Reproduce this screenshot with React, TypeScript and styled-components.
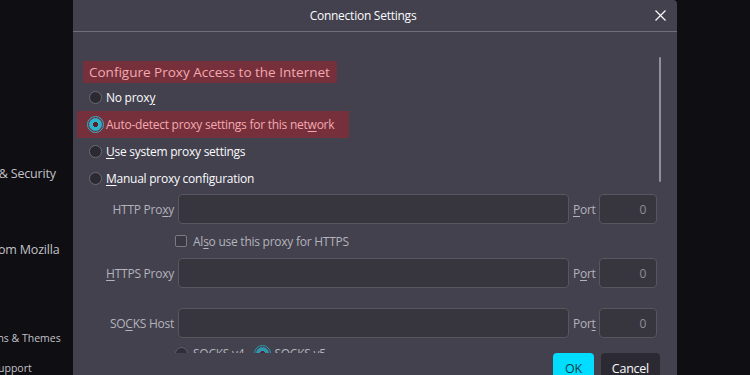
import React from "react";
import styled, { createGlobalStyle } from "styled-components";

const GlobalStyle = createGlobalStyle`
  html, body {
    margin: 0;
    padding: 0;
    background: #0f0e13;
    overflow: hidden;
  }
  body {
    font-family: "Open Sans", "Noto Sans", sans-serif;
    letter-spacing: -0.25px;
    -webkit-font-smoothing: antialiased;
  }
`;

const Page = styled.div`
  width: 750px;
  height: 375px;
  display: flex;
  overflow: hidden;
  background: #0f0e13;
`;

const Sidebar = styled.div`
  width: 73px;
  flex: none;
  overflow: hidden;
`;

const SideList = styled.div`
  display: flex;
  flex-direction: column;
  margin-left: -44px;
  padding-top: 164px;
`;

const SideItem = styled.div<{ $gap: number; $small?: boolean }>`
  margin-top: ${(p) => p.$gap}px;
  height: 20px;
  line-height: 20px;
  white-space: nowrap;
  color: #c2c1c8;
  letter-spacing: ${(p) => (p.$small ? "0" : "-0.2px")};
  font-size: ${(p) => (p.$small ? "10.5px" : "12.5px")};
`;

const Dialog = styled.div`
  width: 604px;
  flex: none;
  height: 375px;
  display: flex;
  flex-direction: column;
  background: #42414d;
  border-top-right-radius: 4px;
  overflow: hidden;
`;

const Header = styled.div`
  height: 31px;
  flex: none;
  display: flex;
  align-items: center;
  justify-content: center;
  padding-right: 24px;
  position: relative;
  border-bottom: 1px solid #6f6e79;
  color: #fbfbfe;
  font-size: 12px;
`;

const CloseButton = styled.div`
  position: absolute;
  right: 10px;
  top: 8px;
  width: 14px;
  height: 14px;
  display: flex;
  align-items: center;
  justify-content: center;
`;

const Scroller = styled.div`
  height: 321px;
  flex: none;
  overflow: hidden;
  position: relative;
  padding: 29px 20px 0 10px;
  box-sizing: border-box;
`;

const ScrollThumb = styled.div`
  position: absolute;
  right: 16px;
  top: 25px;
  width: 2px;
  height: 125px;
  border-radius: 1px;
  background: #8f8f9d;
`;

const Heading = styled.div`
  height: 22px;
  line-height: 22px;
  padding: 0 7px 0 6px;
  background: #75303b;
  color: #f4a9b0;
  font-size: 13.5px;
  letter-spacing: 0;
  margin-bottom: 1px;
`;

const Options = styled.div`
  display: flex;
  flex-direction: column;
  align-items: flex-start;
`;

const RadioRow = styled.div<{ $highlight?: boolean }>`
  height: 27px;
  display: flex;
  align-items: center;
  gap: 4px;
  font-size: 12px;
  color: ${(p) => (p.$highlight ? "#f4a9b0" : "#fbfbfe")};
  background: ${(p) => (p.$highlight ? "#75303b" : "transparent")};
  margin-left: ${(p) => (p.$highlight ? "-6px" : "0")};
  padding: ${(p) => (p.$highlight ? "0 15px 0 12px" : "0 0 0 6px")};
`;

const Radio = styled.span<{ $checked?: boolean; $dim?: boolean }>`
  width: 13px;
  height: 13px;
  flex: none;
  border-radius: 50%;
  box-sizing: border-box;
  background: ${(p) =>
    p.$checked
      ? "radial-gradient(circle, #5a1d29 0 2.3px, #2ab3cb 2.8px)"
      : "#2b2a33"};
  border: 1px solid ${(p) => (p.$checked ? "#2ab3cb" : "#6a6974")};
  outline: ${(p) => (p.$checked ? "1.5px solid #2ab3cb" : "none")};
  outline-offset: 1px;
  opacity: ${(p) => (p.$dim ? 0.75 : 1)};
`;

const Key = styled.span`
  text-decoration: underline;
  text-underline-offset: 2px;
`;

const ProxyGrid = styled.div`
  display: grid;
  grid-template-columns: 91px 391px 22px 58px;
  column-gap: 4px;
  align-items: center;
  margin-top: 2px;
`;

const FieldLabel = styled.div`
  text-align: right;
  color: #b4b3bc;
  font-size: 12px;
  white-space: nowrap;
`;

const PortLabel = styled(FieldLabel)`
  text-align: left;
`;

const Field = styled.div`
  height: 30px;
  box-sizing: border-box;
  border: 1px solid #57565f;
  border-radius: 4px;
  background: #37363f;
  color: #8f8e98;
  font-size: 12px;
  display: flex;
  align-items: center;
  justify-content: flex-end;
  padding-right: 10px;
`;

const SubRow = styled.div<{ $h: number }>`
  grid-column: 2 / 5;
  height: ${(p) => p.$h}px;
  display: flex;
  align-items: center;
  gap: 6px;
  color: #b4b3bc;
  font-size: 12px;
  margin-left: -3px;
`;

const Spacer = styled.div<{ $h: number }>`
  grid-column: 1 / 5;
  height: ${(p) => p.$h}px;
`;

const Checkbox = styled.span`
  width: 12px;
  height: 12px;
  flex: none;
  box-sizing: border-box;
  border: 1px solid #7a7984;
  border-radius: 2px;
  background: #3a3943;
`;

const SocksOption = styled.span`
  display: flex;
  align-items: center;
  gap: 5px;
  margin-right: 6px;
`;

const Footer = styled.div`
  display: flex;
  justify-content: flex-end;
  gap: 7px;
  padding-right: 17px;
`;

const Button = styled.div<{ $primary?: boolean }>`
  height: 30px;
  padding: 0 ${(p) => (p.$primary ? "12px" : "11px")};
  border-radius: 4px;
  display: flex;
  align-items: center;
  box-sizing: border-box;
  font-size: 12.5px;
  background: ${(p) => (p.$primary ? "#00ddff" : "#2b2a33")};
  color: ${(p) => (p.$primary ? "#123d45" : "#fbfbfe")};
`;

export default function App() {
  return (
    <>
      <GlobalStyle />
      <Page>
        <Sidebar>
          <SideList>
            <SideItem $gap={0}>Privacy &amp; Security</SideItem>
            <SideItem $gap={56}>More from Mozilla</SideItem>
            <SideItem $gap={68} $small>
              Extensions &amp; Themes
            </SideItem>
            <SideItem $gap={10} $small>
              Firefox Support
            </SideItem>
          </SideList>
        </Sidebar>
        <Dialog>
          <Header>
            Connection Settings
            <CloseButton>
              <svg width="11" height="11" viewBox="0 0 11 11">
                <path
                  d="M0.5 0.5 L10.5 10.5 M10.5 0.5 L0.5 10.5"
                  stroke="#fbfbfe"
                  strokeWidth="1.2"
                  fill="none"
                />
              </svg>
            </CloseButton>
          </Header>
          <Scroller>
            <ScrollThumb />
            <Options>
              <Heading>Configure Proxy Access to the Internet</Heading>
              <RadioRow>
                <Radio />
                <span>
                  No prox<Key>y</Key>
                </span>
              </RadioRow>
              <RadioRow $highlight>
                <Radio $checked />
                <span>
                  Auto-detect proxy settings for this net<Key>w</Key>ork
                </span>
              </RadioRow>
              <RadioRow>
                <Radio />
                <span>
                  <Key>U</Key>se system proxy settings
                </span>
              </RadioRow>
              <RadioRow>
                <Radio />
                <span>
                  <Key>M</Key>anual proxy configuration
                </span>
              </RadioRow>
            </Options>
            <ProxyGrid>
              <FieldLabel>
                HTTP Pro<Key>x</Key>y
              </FieldLabel>
              <Field />
              <PortLabel>
                <Key>P</Key>ort
              </PortLabel>
              <Field>0</Field>

              <div />
              <SubRow $h={34}>
                <Checkbox />
                <span>
                  Al<Key>s</Key>o use this proxy for HTTPS
                </span>
              </SubRow>

              <FieldLabel>
                <Key>H</Key>TTPS Proxy
              </FieldLabel>
              <Field />
              <PortLabel>
                P<Key>o</Key>rt
              </PortLabel>
              <Field>0</Field>

              <Spacer $h={20} />

              <FieldLabel>
                SO<Key>C</Key>KS Host
              </FieldLabel>
              <Field />
              <PortLabel>
                Por<Key>t</Key>
              </PortLabel>
              <Field>0</Field>

              <div />
              <SubRow $h={30}>
                <SocksOption>
                  <Radio $dim />
                  <span>
                    SOCKS <Key>v</Key>4
                  </span>
                </SocksOption>
                <SocksOption>
                  <Radio $checked $dim />
                  <span>
                    SOCKS v<Key>5</Key>
                  </span>
                </SocksOption>
              </SubRow>
            </ProxyGrid>
          </Scroller>
          <Footer>
            <Button $primary>OK</Button>
            <Button>Cancel</Button>
          </Footer>
        </Dialog>
      </Page>
    </>
  );
}
